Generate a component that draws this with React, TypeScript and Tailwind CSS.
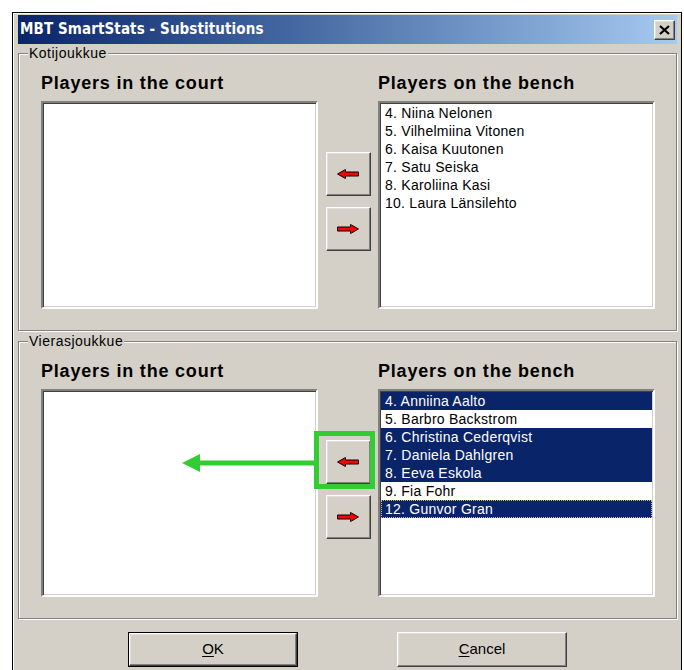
import type { ReactNode } from 'react'

type Player = { label: string; selected?: boolean; focused?: boolean }

const homeBench: Player[] = [
  { label: '4. Niina Nelonen' },
  { label: '5. Vilhelmiina Vitonen' },
  { label: '6. Kaisa Kuutonen' },
  { label: '7. Satu Seiska' },
  { label: '8. Karoliina Kasi' },
  { label: '10. Laura Länsilehto' },
]

const awayBench: Player[] = [
  { label: '4. Anniina Aalto', selected: true },
  { label: '5. Barbro Backstrom' },
  { label: '6. Christina Cederqvist', selected: true },
  { label: '7. Daniela Dahlgren', selected: true },
  { label: '8. Eeva Eskola', selected: true },
  { label: '9. Fia Fohr' },
  { label: '12. Gunvor Gran', selected: true, focused: true },
]

const raised =
  'bg-[#d4d0c8] border border-t-white border-l-white border-r-[#404040] border-b-[#404040] shadow-[inset_-1px_-1px_0_#808080,inset_1px_1px_0_#dfdfdf]'

function ArrowIcon({ dir }: { dir: 'left' | 'right' }) {
  return (
    <svg width="24" height="12" viewBox="0 0 24 12" className={dir === 'right' ? 'scale-x-[-1]' : ''}>
      <path d="M1.5 6 L9.5 1.5 L9.5 4 L22.5 4 L22.5 8 L9.5 8 L9.5 10.5 Z" fill="#ff0000" stroke="#000" strokeWidth="1" strokeLinejoin="miter" />
    </svg>
  )
}

function MoveButton({ dir }: { dir: 'left' | 'right' }) {
  return (
    <button className={`${raised} w-[45px] h-[44px] flex items-center justify-center`}>
      <ArrowIcon dir={dir} />
    </button>
  )
}

function ListBox({ items }: { items: Player[] }) {
  return (
    <div className="h-[208px] bg-white border-2 border-t-[#808080] border-l-[#808080] border-r-white border-b-white shadow-[inset_1px_1px_0_#404040,inset_-1px_-1px_0_#d4d0c8] pt-[1px] overflow-hidden">
      {items.map((p) => (
        <div
          key={p.label}
          className={`h-[18px] leading-[18px] pl-[4px] mx-[1px] text-[14px] tracking-[0.25px] whitespace-nowrap ${
            p.selected ? 'bg-[#0a246a] text-white' : 'text-black'
          } ${p.focused ? 'outline-1 outline-dotted outline-[#c8c080] -outline-offset-1' : ''}`}
        >
          {p.label}
        </div>
      ))}
    </div>
  )
}

function Column({ title, items }: { title: string; items: Player[] }) {
  return (
    <div className="flex flex-col">
      <h2 className="text-[18px] leading-[20px] font-bold tracking-[0.8px] text-black mb-[8px] whitespace-nowrap">{title}</h2>
      <ListBox items={items} />
    </div>
  )
}

function Group({ legend, bench }: { legend: string; bench: Player[] }) {
  return (
    <fieldset className="border border-[#808080] shadow-[inset_1px_1px_0_#fff,1px_1px_0_#fff] pl-[9px]">
      <legend className="px-[1px] bg-[#d4d0c8] text-[14px] leading-[14px] tracking-[0.5px] text-black">{legend}</legend>
      <div className="grid grid-cols-[277px_60px_277px] pl-[13px] pr-[19px] pt-[13px] pb-[21px]">
        <Column title="Players in the court" items={[]} />
        <div className="flex flex-col items-center gap-[11px] pt-[79px]">
          <MoveButton dir="left" />
          <MoveButton dir="right" />
        </div>
        <Column title="Players on the bench" items={bench} />
      </div>
    </fieldset>
  )
}

function DialogButton({ children, isDefault }: { children: ReactNode; isDefault?: boolean }) {
  return (
    <div className={`w-[170px] h-[35px] ${isDefault ? 'border border-black' : ''}`}>
      <button className={`${raised} w-full h-full text-[15px] text-black`}>{children}</button>
    </div>
  )
}

export default function App() {
  return (
    <div className="relative w-[684px] h-[670px] bg-white overflow-hidden font-['Liberation_Sans',Arial,sans-serif]">
      <div className="ml-[12px] mt-[12px] w-[670px] h-[700px] border border-black bg-[#d4d0c8] shadow-[inset_1px_1px_0_#fff] pt-[2px] pl-[5px] pr-[4px]">
        {/* Title bar */}
        <div className="h-[29px] flex items-center justify-between pl-[2px] pr-[2px] bg-gradient-to-r from-[#0a246a] to-[#a6caf0]">
          <span className="text-white font-bold text-[15px] font-['DejaVu_Sans_Condensed','DejaVu_Sans',sans-serif] tracking-[0.1px]">
            MBT SmartStats - Substitutions
          </span>
          <button className={`${raised} w-[21px] h-[20px] flex items-center justify-center`}>
            <svg width="11" height="10" viewBox="0 0 11 10">
              <path d="M1 1 L10 9 M10 1 L1 9" stroke="#000" strokeWidth="2.2" />
            </svg>
          </button>
        </div>

        <div className="mt-[2px]">
          <Group legend="Kotijoukkue" bench={homeBench} />
        </div>
        <div className="mt-[3px]">
          <Group legend="Vierasjoukkue" bench={awayBench} />
        </div>

        <div className="mt-[13px] flex justify-center gap-[99px]">
          <DialogButton isDefault>
            <span className="underline underline-offset-2">O</span>K
          </DialogButton>
          <DialogButton>
            <span className="underline underline-offset-2">C</span>ancel
          </DialogButton>
        </div>
      </div>

      {/* Green callout over the move button */}
      <svg className="absolute left-0 top-0 pointer-events-none" width="684" height="670">
        <rect x="316.5" y="433.5" width="56" height="53" fill="none" stroke="#33cc33" strokeWidth="5" />
        <line x1="196" y1="463" x2="315" y2="463" stroke="#33cc33" strokeWidth="5" />
        <polygon points="182,463 200,454 200,472" fill="#33cc33" />
      </svg>
    </div>
  )
}
